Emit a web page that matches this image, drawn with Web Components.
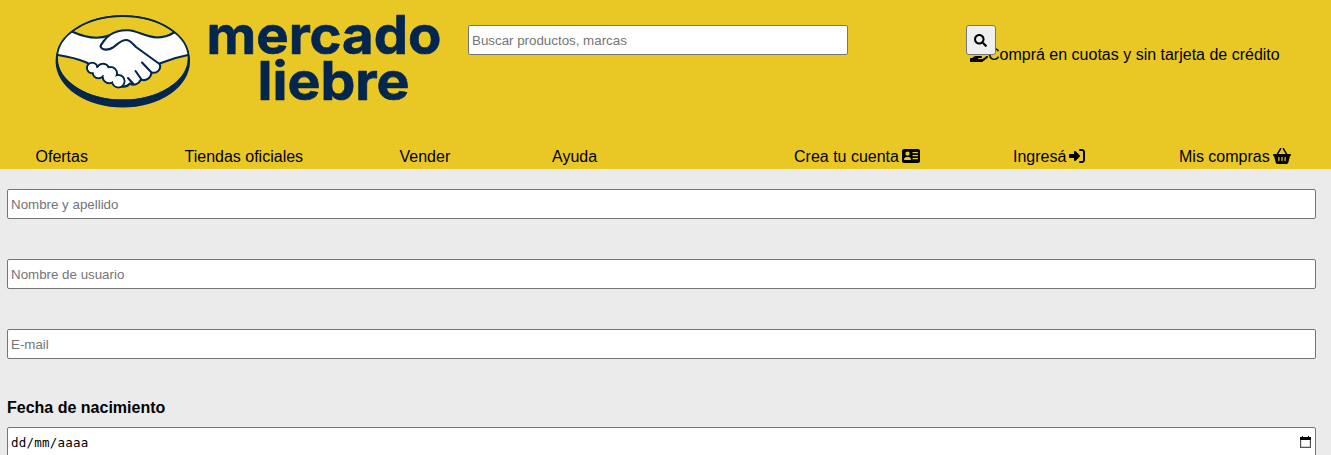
<!DOCTYPE html>
<html lang="es">
<head>
<meta charset="utf-8">
<title>Mercado Liebre</title>
<style>
html, body { height: 100%; }
body { margin: 0; background: #ebebeb; color: #000; font: 16px "Liberation Sans", Arial, sans-serif; overflow: hidden; }
</style>
</head>
<body>
<ml-header></ml-header>
<ml-form>
  <ml-field>Nombre y apellido</ml-field>
  <ml-field>Nombre de usuario</ml-field>
  <ml-field>E-mail</ml-field>
  <ml-date-field label="Fecha de nacimiento">dd/mm/aaaa</ml-date-field>
</ml-form>
<script>
const define = (name, html) => customElements.define(name, class extends HTMLElement {
  constructor() {
    super();
    const t = document.createElement('template');
    t.innerHTML = html;
    this.attachShadow({ mode: 'open' }).append(t.content.cloneNode(true));
    const label = this.shadowRoot.querySelector('[data-label]');
    if (label) label.textContent = this.getAttribute('label');
  }
});

const ICONS = {
  search: ['0 0 512 512', 13, 13, '<path d="M505 442.7L405.3 343c-4.5-4.5-10.6-7-17-7H372c27.6-35.3 44-79.7 44-128C416 93.1 322.9 0 208 0S0 93.1 0 208s93.1 208 208 208c48.3 0 92.7-16.4 128-44v16.3c0 6.4 2.5 12.5 7 17l99.7 99.7c9.4 9.4 24.6 9.4 33.9 0l28.3-28.3c9.4-9.4 9.4-24.6.1-34zM208 336c-70.7 0-128-57.2-128-128 0-70.7 57.2-128 128-128 70.7 0 128 57.2 128 128 0 70.7-57.2 128-128 128z"/>'],
  hand: ['0 0 576 512', 18, 16, '<path d="M565 328c-12-11-30-10-43 0l-92 74c-12 9-26 14-40 14H272c-9 0-16-7-16-16s7-16 16-16h78c16 0 31-11 33-27 3-20-12-37-31-37H192c-27 0-53 9-74 26l-47 38H16c-9 0-16 7-16 16v96c0 9 7 16 16 16h357c15 0 29-5 40-14l151-121c15-12 16-36 1-49z"/>'],
  card: ['0 0 576 512', 18, 16, '<path fill-rule="evenodd" d="M64 32C29 32 0 61 0 96v320c0 35 29 64 64 64h448c35 0 64-29 64-64V96c0-35-29-64-64-64zM176 112a68 68 0 1 1 0 136 68 68 0 0 1 0-136zM144 288h64c44 0 80 36 80 80 0 9-7 16-16 16H80c-9 0-16-7-16-16 0-44 36-80 80-80zM352 128h144a20 20 0 0 1 0 40H352a20 20 0 0 1 0-40zm0 96h144a20 20 0 0 1 0 40H352a20 20 0 0 1 0-40zm0 96h144a20 20 0 0 1 0 40H352a20 20 0 0 1 0-40z"/>'],
  login: ['0 0 512 512', 16, 16, '<path d="M352 96h64c18 0 32 14 32 32v256c0 18-14 32-32 32h-64a32 32 0 0 0 0 64h64c53 0 96-43 96-96V128c0-53-43-96-96-96h-64a32 32 0 0 0 0 64zM342 278c13-12 13-33 0-45L214 105c-9-9-23-12-35-7s-20 17-20 30v64H32c-18 0-32 14-32 32v64c0 18 14 32 32 32h127v64c0 13 8 25 20 30s26 2 35-7z"/>'],
  basket: ['0 0 576 512', 18, 16, '<path fill-rule="evenodd" d="M253 3c12 7 16 21 9 33L170 192h236L314 36c-7-12-3-26 9-33s26-3 33 9l106 180h82c18 0 32 14 32 32s-14 32-32 32l-55 207c-7 28-33 49-62 49H149c-29 0-55-21-62-49L32 256c-18 0-32-14-32-32s14-32 32-32h82L220 12c7-12 21-16 33-9zM188 280c-11 0-20 9-20 20v100a20 20 0 0 0 40 0V300c0-11-9-20-20-20zm100 0c-11 0-20 9-20 20v100a20 20 0 0 0 40 0V300c0-11-9-20-20-20zm100 0c-11 0-20 9-20 20v100a20 20 0 0 0 40 0V300c0-11-9-20-20-20z"/>']
};
customElements.define('ml-icon', class extends HTMLElement {
  connectedCallback() {
    if (this.shadowRoot) return;
    const [box, w, h, body] = ICONS[this.getAttribute('name')];
    this.attachShadow({ mode: 'open' }).innerHTML =
      `<style>:host{display:inline-block;flex:none}svg{display:block}</style><svg width="${w}" height="${h}" viewBox="${box}">${body}</svg>`;
  }
});

define('ml-logo', `
<style>
:host { display: block; width: 400px; height: 120px; }
svg { display: block; }
text { font-family: Inter, "Liberation Sans", sans-serif; font-weight: 700; fill: #02264d; stroke: #02264d; stroke-width: .7; stroke-linejoin: round; }
</style>
<svg width="400" height="120" viewBox="50 0 400 120" role="img" aria-label="mercado liebre">
  <defs><clipPath id="oval"><ellipse cx="122.8" cy="58" rx="66" ry="42.2"/></clipPath></defs>
  <ellipse cx="122.8" cy="61.3" rx="67.2" ry="46.3" fill="#02264d"/>
  <ellipse cx="122.8" cy="58.2" rx="65.4" ry="41.6" fill="#e9c826"/>
  <g clip-path="url(#oval)" stroke="#02264d" stroke-width="2.1" stroke-linejoin="round" stroke-linecap="round">
    <path fill="#fff" d="M50 28 L73 32 C83 36.500 97 40 109 35.500 C115 31.500 121 30 128 30.300 C139 31 145 37 157 37.500 C164 37.500 170 35 174 32.500 L196 26 V54 L188 55 C177 57 168 60 159.500 63.500 C162 69 157 74 151.500 72.500 C151 78 146 81.500 141 79.500 C139 84 134 86 130 83.500 C127 87.500 121 87 119 86 L92 66 L86.500 62.500 C77 58.500 68 56.500 58 55 L48 54z"/>
    <g fill="#fff"><circle cx="92.200" cy="68" r="5.200"/><circle cx="98.500" cy="72.500" r="5.800"/><circle cx="103" cy="70" r="6.200"/><circle cx="109.500" cy="76.500" r="6.800"/><circle cx="110.500" cy="73.500" r="6.500"/><circle cx="118.300" cy="81.200" r="6.200"/></g>
    <g fill="#fff" stroke="none"><circle cx="92.200" cy="68" r="4.200"/><circle cx="98.500" cy="72.500" r="4.800"/><circle cx="103" cy="70" r="5.200"/><circle cx="109.500" cy="76.500" r="5.800"/><circle cx="110.500" cy="73.500" r="5.500"/><circle cx="118.300" cy="81.200" r="5.200"/></g>
    <path fill="none" d="M109 35.500 C106 38 101 44 100.500 46.500 C102 50.500 108 50.500 113 47.500 C118 44 121 39.500 127 40 C131 41 133 44 136 47 L159.500 64 M142 62.500 L151.500 72.500 M135.500 71 L141.500 79.500 M128 78 L133 83.500"/>
  </g>
  <ellipse cx="122.8" cy="58.2" rx="65.800" ry="42" fill="none" stroke="#02264d" stroke-width="1.800"/>
  <text x="206.500" y="54" font-size="54" textLength="235" lengthAdjust="spacingAndGlyphs">mercado</text>
  <text x="257.500" y="99.500" font-size="53" textLength="152" lengthAdjust="spacingAndGlyphs">liebre</text>
</svg>`);

define('ml-input', `
<style>
:host { display: block; box-sizing: border-box; height: 30px; padding: 0 3px; border: 1px solid #767676; border-radius: 2px; background: #fff; color: #757575; font-size: 13.333px; line-height: 29px; }
</style><slot></slot>`);

define('ml-header', `
<style>
:host { display: grid; grid-template-rows: 148px 21px; height: 169px; background: #e9c826; }
.top { display: flex; align-items: flex-start; padding-left: 50px; }
.search { width: 380px; margin: 25px 0 0 18px; }
button { position: relative; z-index: 1; box-sizing: border-box; width: 30px; height: 30px; margin: 25px 0 0 118px; padding: 0 1px 0 0; border: 1px solid #767676; border-radius: 3px; background: #efefef; display: flex; align-items: center; justify-content: center; }
.promo { display: flex; align-items: flex-start; margin: 46px 0 0 -26px; line-height: 18px; white-space: nowrap; }
nav { display: grid; grid-template-columns: 149px 215px 152.500px 242px 219px 166px auto; padding-left: 35.500px; line-height: 18px; }
nav span { display: flex; align-items: flex-start; gap: 3px; white-space: nowrap; }
</style>
<div class="top">
  <ml-logo></ml-logo>
  <ml-input class="search">Buscar productos, marcas</ml-input>
  <button aria-label="Buscar"><ml-icon name="search"></ml-icon></button>
  <div class="promo"><ml-icon name="hand"></ml-icon><span>Comprá en cuotas y sin tarjeta de crédito</span></div>
</div>
<nav>
  <span>Ofertas</span><span>Tiendas oficiales</span><span>Vender</span><span>Ayuda</span>
  <span>Crea tu cuenta<ml-icon name="card"></ml-icon></span>
  <span>Ingresá<ml-icon name="login"></ml-icon></span>
  <span>Mis compras<ml-icon name="basket"></ml-icon></span>
</nav>`);

define('ml-form', `
<style>:host { display: flex; flex-direction: column; gap: 40px; padding: 20px 15px 0 7px; }</style><slot></slot>`);

define('ml-field', `
<style>:host { display: block; }</style><ml-input><slot></slot></ml-input>`);

define('ml-date-field', `
<style>
:host { display: block; }
b { display: block; height: 28px; line-height: 18px; }
ml-input { color: #000; }
div { display: flex; justify-content: space-between; align-items: center; height: 28px; font: 12.500px "DejaVu Sans Mono", monospace; letter-spacing: .23px; }
svg { margin-right: 1px; }
</style>
<b data-label></b>
<ml-input><div><span><slot></slot></span>
<svg width="11" height="12" viewBox="0 0 11 12"><path d="M.6 2v9.400h9.800V2" fill="none" stroke="#555" stroke-width="1.200"/><path d="M0 1h2V0h1v1h5V0h1v1h2v3H0z"/></svg></div></ml-input>`);
</script>
</body>
</html>
